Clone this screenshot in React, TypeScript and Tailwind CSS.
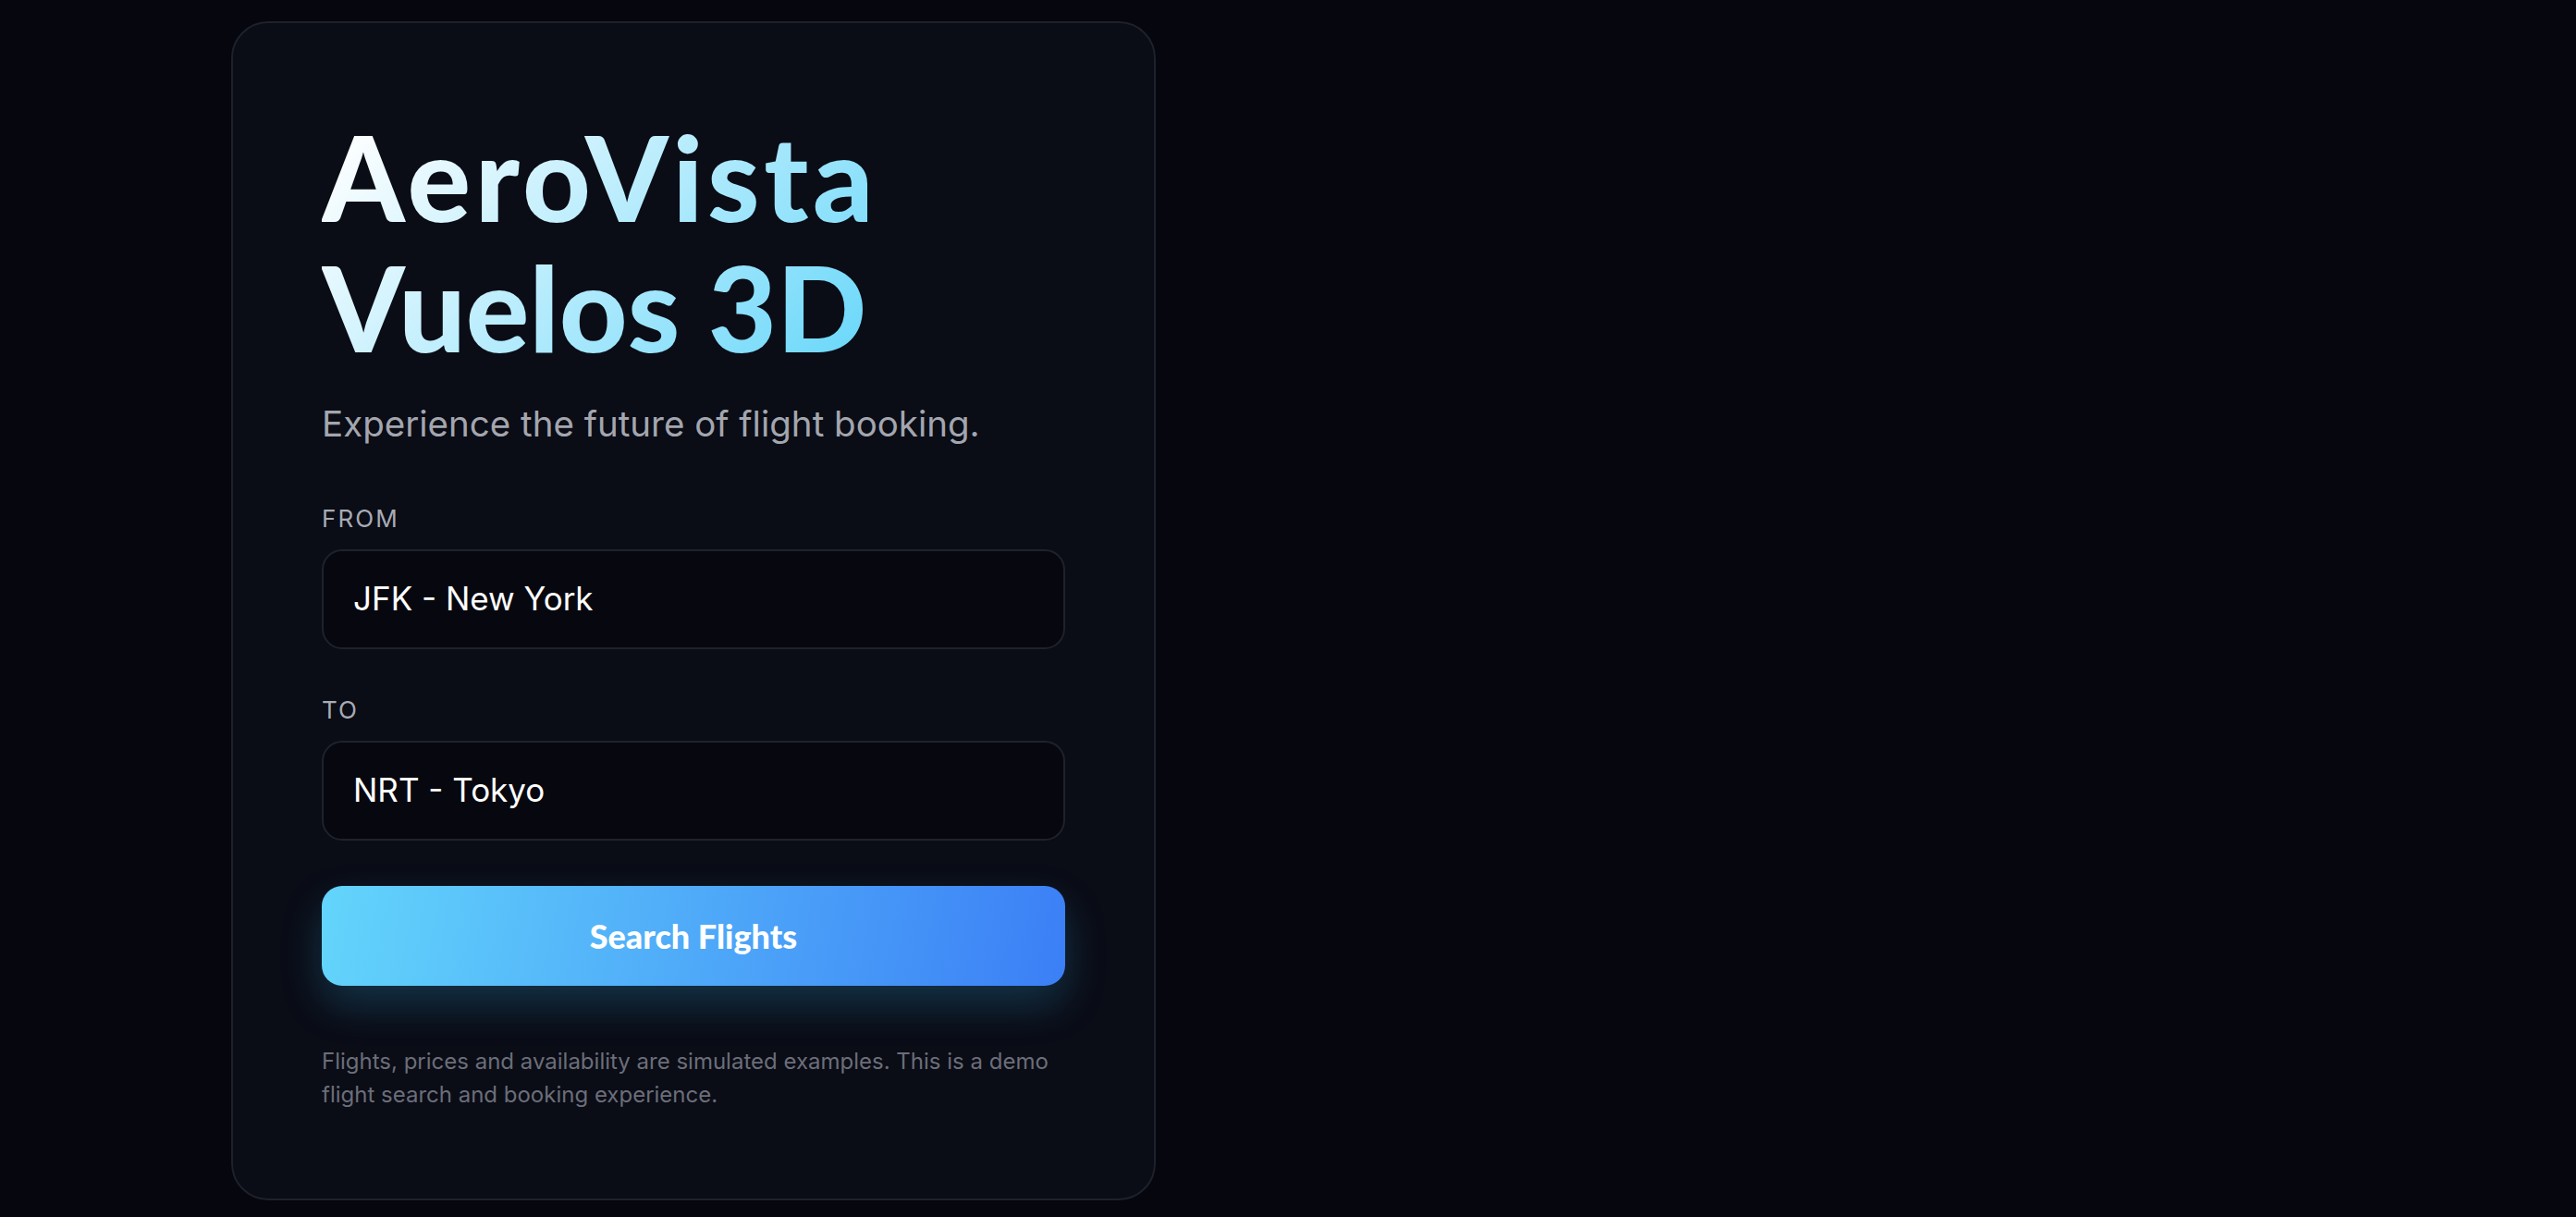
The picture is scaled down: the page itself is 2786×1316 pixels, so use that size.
import React from "react"

const inter = { fontFamily: "Inter, 'Noto Sans', sans-serif" }

function Field({ label, value }: { label: string; value: string }) {
  return (
    <div className="flex flex-col">
      <label className="text-[26px] leading-[39px] tracking-[0.08em] text-[#a7abb4] mb-[14px]">{label}</label>
      <div className="h-[108px] flex items-center rounded-[22px] border-2 border-[#1f222b] bg-[#07080f] px-[32px]">
        <span className="text-[35px] text-white">{value}</span>
      </div>
    </div>
  )
}

export default function App() {
  return (
    <div className="min-h-screen bg-[#05060e] pl-[250px] pt-[23px] pb-[18px]" style={inter}>
      <div className="w-[1000px] h-[1275px] rounded-[40px] border-2 border-[#1e212b] bg-[#0a0c16] px-[96px] pt-[96px] flex flex-col">
        <h1 className="font-['Lato',sans-serif] font-black text-[128px] leading-[1.1] w-fit bg-[linear-gradient(135deg,#ffffff_5%,#6cd8fa_95%)] bg-clip-text text-transparent">
          <span className="block tracking-[0.035em]">AeroVista</span>
          <span className="block tracking-[0em]">Vuelos 3D</span>
        </h1>
        <p className="mt-[27px] text-[38.5px] leading-[57px] text-[#a3a6ae]">Experience the future of flight booking.</p>

        <div className="mt-[54px] flex flex-col gap-[46px]">
          <Field label="FROM" value="JFK - New York" />
          <Field label="TO" value="NRT - Tokyo" />
        </div>

        <button className="mt-[49px] h-[108px] w-full rounded-[22px] bg-[linear-gradient(100deg,#63d5fb,#3b7ff6)] shadow-[0_20px_45px_rgba(56,189,248,0.22)] font-['Lato',sans-serif] font-black text-[36px] text-white">
          Search Flights
        </button>

        <p className="mt-[64px] text-[24px] leading-[36px] text-[#6b6e79] pr-[10px]">
          Flights, prices and availability are simulated examples. This is a demo flight search and booking experience.
        </p>
      </div>
    </div>
  )
}
